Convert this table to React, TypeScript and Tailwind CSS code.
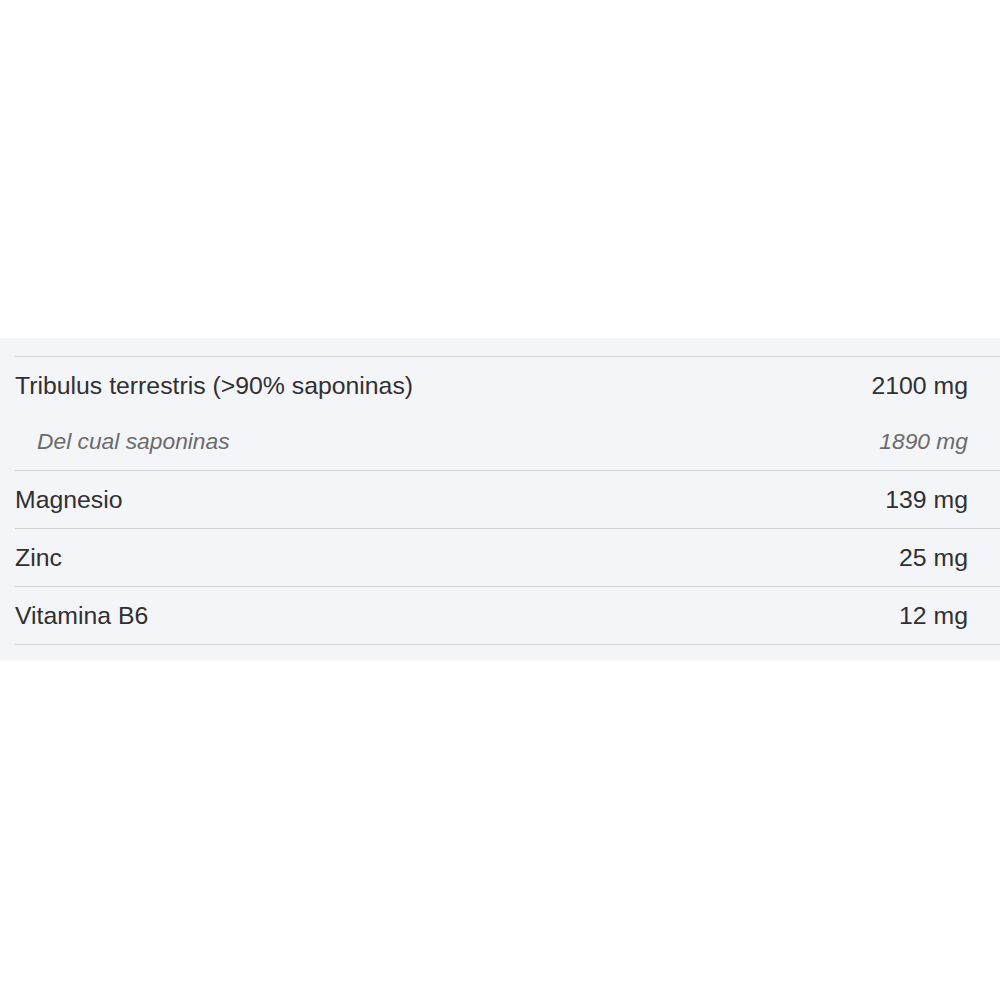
const rows = [
  { name: "Tribulus terrestris (>90% saponinas)", amount: "2100 mg", sub: { name: "Del cual saponinas", amount: "1890 mg" } },
  { name: "Magnesio", amount: "139 mg" },
  { name: "Zinc", amount: "25 mg" },
  { name: "Vitamina B6", amount: "12 mg" },
];

export default function App() {
  return (
    <div className="w-[1000px] h-[1000px] bg-white flex flex-col" style={{ fontFamily: '"Liberation Sans", Arial, sans-serif' }}>
      <div className="h-[338px]" />
      <div className="bg-[#f4f5f9] pt-[18px] pb-[16px] pl-[15px]">
        <div className="border-t border-[#d3d4d8]">
          {rows.map((row, idx) => (
            <div key={idx} className="border-b border-[#d3d4d8]">
              <div className="h-[57px] flex items-center justify-between pr-[32px] text-[24.8px] text-[#303030]">
                <span>{row.name}</span>
                <span>{row.amount}</span>
              </div>
              {row.sub && (
                <div className="h-[56px] flex items-center justify-between pl-[22px] pr-[32px] pb-[1px] text-[22.8px] italic text-[#6b6b6b]">
                  <span>{row.sub.name}</span>
                  <span>{row.sub.amount}</span>
                </div>
              )}
            </div>
          ))}
        </div>
      </div>
    </div>
  );
}
